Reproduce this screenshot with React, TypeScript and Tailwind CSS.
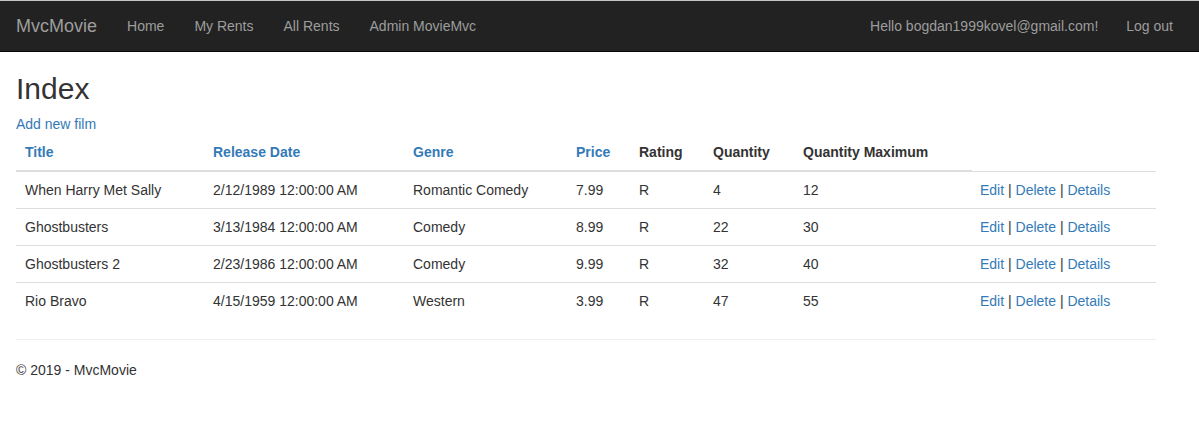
import React from "react";

const movies = [
  { title: "When Harry Met Sally", date: "2/12/1989 12:00:00 AM", genre: "Romantic Comedy", price: "7.99", rating: "R", q: "4", qm: "12" },
  { title: "Ghostbusters", date: "3/13/1984 12:00:00 AM", genre: "Comedy", price: "8.99", rating: "R", q: "22", qm: "30" },
  { title: "Ghostbusters 2", date: "2/23/1986 12:00:00 AM", genre: "Comedy", price: "9.99", rating: "R", q: "32", qm: "40" },
  { title: "Rio Bravo", date: "4/15/1959 12:00:00 AM", genre: "Western", price: "3.99", rating: "R", q: "47", qm: "55" },
];

export default function App() {
  return (
    <div
      className="min-h-[435px] bg-white text-[14px] leading-[20px] text-[#333]"
      style={{ fontFamily: '"Liberation Sans", Arial, Helvetica, sans-serif' }}
    >
      <nav className="h-[52px] bg-[#222] border-t border-t-[#c4c4c4] border-b border-b-[#080808] flex justify-between pl-px pr-[11px]">
        <div className="flex">
          <a className="px-[15px] py-[15px] text-[18px] leading-[20px] text-[#9d9d9d]">MvcMovie</a>
          <a className="px-[15px] py-[15px] text-[#9d9d9d]">Home</a>
          <a className="px-[15px] py-[15px] text-[#9d9d9d]">My Rents</a>
          <a className="px-[15px] py-[15px] text-[#9d9d9d]">All Rents</a>
          <a className="px-[15px] py-[15px] text-[#9d9d9d]">Admin MovieMvc</a>
        </div>
        <div className="flex">
          <a className="pl-[15px] pr-[13px] py-[15px] text-[#9d9d9d]">Hello bogdan1999kovel@gmail.com!</a>
          <a className="px-[15px] py-[15px] text-[#9d9d9d]">Log out</a>
        </div>
      </nav>
      <div className="pl-4 w-[1156px]">
        <h2 className="mt-5 mb-[9px] text-[30px] leading-[33px] font-normal">Index</h2>
        <p className="h-5">
          <a className="text-[#337ab7]">Add new film</a>
        </p>
        <table className="w-full table-fixed border-collapse mb-5">
          <colgroup>
            <col className="w-[189px]" />
            <col className="w-[200px]" />
            <col className="w-[163px]" />
            <col className="w-[63px]" />
            <col className="w-[74px]" />
            <col className="w-[90px]" />
            <col className="w-[177px]" />
            <col />
          </colgroup>
          <thead>
            <tr>
              <th className="text-left font-bold py-2 pr-2 pl-[9px] border-b-2 border-[#ddd]"><a className="text-[#337ab7]">Title</a></th>
              <th className="text-left font-bold p-2 border-b-2 border-[#ddd]"><a className="text-[#337ab7]">Release Date</a></th>
              <th className="text-left font-bold p-2 border-b-2 border-[#ddd]"><a className="text-[#337ab7]">Genre</a></th>
              <th className="text-left font-bold p-2 border-b-2 border-[#ddd]"><a className="text-[#337ab7]">Price</a></th>
              <th className="text-left font-bold p-2 border-b-2 border-[#ddd]">Rating</th>
              <th className="text-left font-bold p-2 border-b-2 border-[#ddd]">Quantity</th>
              <th className="text-left font-bold p-2 border-b-2 border-[#ddd] whitespace-nowrap">Quantity Maximum</th>
            </tr>
          </thead>
          <tbody>
            {movies.map((m) => (
              <tr key={m.title}>
                <td className="py-2 pr-2 pl-[9px] border-t border-[#ddd]">{m.title}</td>
                <td className="p-2 border-t border-[#ddd]">{m.date}</td>
                <td className="p-2 border-t border-[#ddd]">{m.genre}</td>
                <td className="p-2 border-t border-[#ddd]">{m.price}</td>
                <td className="p-2 border-t border-[#ddd]">{m.rating}</td>
                <td className="p-2 border-t border-[#ddd]">{m.q}</td>
                <td className="p-2 border-t border-[#ddd]">{m.qm}</td>
                <td className="p-2 border-t border-[#ddd]">
                  <a className="text-[#337ab7]">Edit</a> | <a className="text-[#337ab7]">Delete</a> |{" "}
                  <a className="text-[#337ab7]">Details</a>
                </td>
              </tr>
            ))}
          </tbody>
        </table>
        <hr className="border-0 border-t border-[#eee] mb-5" />
        <footer>
          <p>© 2019 - MvcMovie</p>
        </footer>
      </div>
    </div>
  );
}
